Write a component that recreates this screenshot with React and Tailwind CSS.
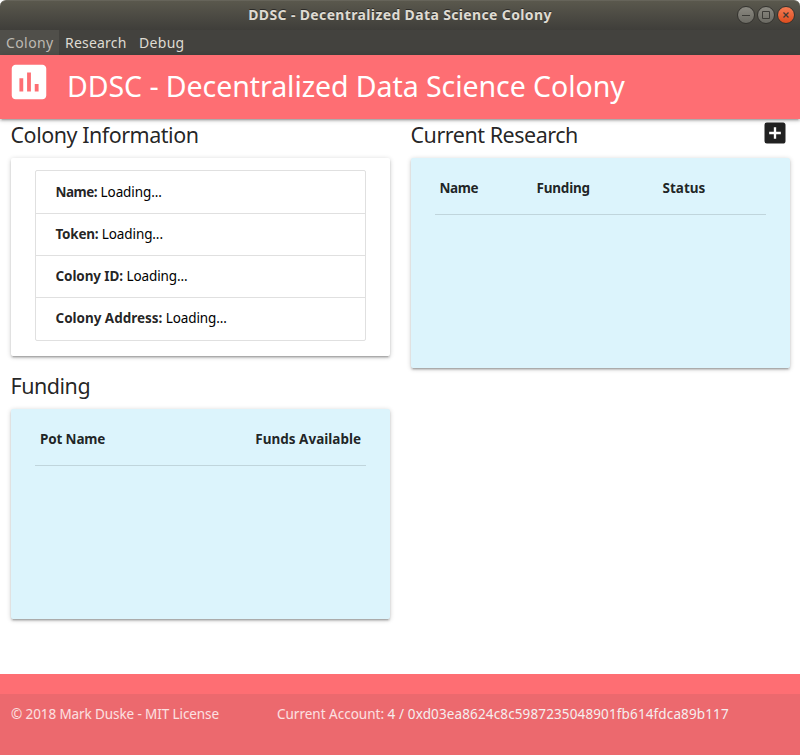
import { MdAddBox, MdAssessment } from "react-icons/md";

const cardShadow =
  "rounded-[2px] shadow-[0_2px_2px_0_rgba(0,0,0,0.14),0_3px_1px_-2px_rgba(0,0,0,0.12),0_1px_5px_0_rgba(0,0,0,0.2)]";

const details = [
  { label: "Name:", tracking: "tracking-[-0.5px]" },
  { label: "Token:", tracking: "tracking-[-0.25px]" },
  { label: "Colony ID:", tracking: "tracking-[-0.1px]" },
  { label: "Colony Address:", tracking: "tracking-[-0.03px]" },
];

function WindowButton({ close, children }) {
  return (
    <span
      className={
        close
          ? "flex size-[18px] items-center justify-center rounded-full border border-[#34332f] bg-linear-to-b from-[#f47b52] to-[#dd4c1c]"
          : "flex size-[18px] items-center justify-center rounded-full border border-[#34332f] bg-linear-to-b from-[#8b8981] to-[#6b6a63]"
      }
    >
      <svg
        className="size-4 shrink-0"
        viewBox="0 0 16 16"
        fill="none"
        stroke="#3c3b37"
        strokeWidth="1"
      >
        {children}
      </svg>
    </span>
  );
}

function TitleBar() {
  return (
    <div className="grid h-[30px] grid-cols-[1fr_auto_1fr] items-center rounded-t-[6px] border-t border-[#66645a] bg-linear-to-b from-[#5a584d] to-[#3f3e3a] pr-[5px] pb-[2px]">
      <span />
      <h1 className="ml-[5px] text-[14px] leading-[21px] font-bold tracking-[0.36px] whitespace-nowrap text-[#dfdbd2] [text-shadow:0_-1px_0_#2b2a27]">
        DDSC - Decentralized Data Science Colony
      </h1>
      <div className="flex justify-end gap-[2px]">
        <WindowButton>
          <path d="M4 8.5h8" />
        </WindowButton>
        <WindowButton>
          <path d="M4.5 4.5h7v7h-7z" />
        </WindowButton>
        <WindowButton close>
          <path d="M5.5 5.5l5 5M10.5 5.5l-5 5" strokeWidth="1.3" />
        </WindowButton>
      </div>
    </div>
  );
}

function MenuBar() {
  return (
    <div className="flex h-[25px] items-center bg-[#43423e] text-[14px] leading-[25px] text-[#dfdbd2]">
      <span className="w-[59px] bg-[#504f4a] pl-[6px] tracking-[0.4px] text-[#bebab2]">Colony</span>
      <span className="w-[74px] pl-[6px] tracking-[0.2px]">Research</span>
      <span className="pl-[6px] tracking-[0.3px]">Debug</span>
    </div>
  );
}

function SectionTitle({ children }) {
  return (
    <h3 className="-ml-[0.5px] text-[21.5px] leading-[32px] tracking-[-0.48px] whitespace-nowrap">
      {children}
    </h3>
  );
}

export default function App() {
  return (
    <div className="bg-white">
      <div className="flex h-[755px] w-[800px] flex-col overflow-hidden font-['Noto_Sans',sans-serif] text-[rgba(0,0,0,0.87)]">
        <TitleBar />
        <MenuBar />
        <nav className="flex h-16 shrink-0 bg-[#fe6e73] text-white shadow-[0_2px_2px_0_rgba(0,0,0,0.14),0_3px_1px_-2px_rgba(0,0,0,0.12),0_1px_5px_0_rgba(0,0,0,0.2)]">
          <MdAssessment className="mt-1 ml-[6px] size-[46px]" />
          <span className="ml-[15px] text-[28.5px] leading-[63px] tracking-[-0.06px] whitespace-nowrap">
            DDSC - Decentralized Data Science Colony
          </span>
        </nav>

        <main className="flex grow gap-[21px] px-[11px]">
          <div className="w-[379px] shrink-0">
            <SectionTitle>Colony Information</SectionTitle>
            <section className={`mt-[7px] h-[198px] px-6 pt-3 ${cardShadow}`}>
              <ul className="h-[171px] w-[331px] divide-y divide-[#e0e0e0] rounded-[2px] border border-[#e0e0e0] pt-px text-[13.5px] leading-[41px] text-black">
                {details.map((item) => (
                  <li key={item.label} className="pl-[19.5px] whitespace-nowrap">
                    <b className={`text-[rgba(0,0,0,0.87)] ${item.tracking}`}>{item.label}</b>{" "}
                    <span className="tracking-[-0.1px]">Loading...</span>
                  </li>
                ))}
              </ul>
            </section>
            <div className="mt-[14px]">
              <SectionTitle>Funding</SectionTitle>
            </div>
            <section className={`mt-[7px] h-[210px] bg-[#dcf4fc] px-6 ${cardShadow}`}>
              <div className="flex h-[57px] w-[331px] justify-between border-b border-[#c0d5dc] px-[5px] text-[13.5px] leading-[60px] font-bold">
                <span className="tracking-[-0.15px]">Pot Name</span>
                <span>Funds Available</span>
              </div>
            </section>
          </div>

          <div className="w-[379px] shrink-0">
            <div className="flex h-8 justify-between">
              <SectionTitle>Current Research</SectionTitle>
              <MdAddBox className="mr-px size-[28px]" />
            </div>
            <section className={`mt-[7px] h-[210px] bg-[#dcf4fc] px-6 ${cardShadow}`}>
              <div className="flex h-[57px] w-[331px] border-b border-[#c0d5dc] pl-[4.5px] text-[13.5px] leading-[60px] font-bold">
                <span className="w-[97px] tracking-[-0.4px]">Name</span>
                <span className="w-[126px] tracking-[-0.2px]">Funding</span>
                <span>Status</span>
              </div>
            </section>
          </div>
        </main>

        <footer className="h-[81px] bg-[#fe6e73] pt-5">
          <div className="flex h-[61px] bg-[#ec696e] pl-[11px] text-[13.5px] leading-[41px] whitespace-nowrap text-white/80">
            <span className="w-[266px] tracking-[-0.1px]">© 2018 Mark Duske - MIT License</span>
            <span>
              Current Account:{" "}
              <span className="tracking-[0.13px] text-[#f5eeee]">
                4 / 0xd03ea8624c8c5987235048901fb614fdca89b117
              </span>
            </span>
          </div>
        </footer>
      </div>
    </div>
  );
}
